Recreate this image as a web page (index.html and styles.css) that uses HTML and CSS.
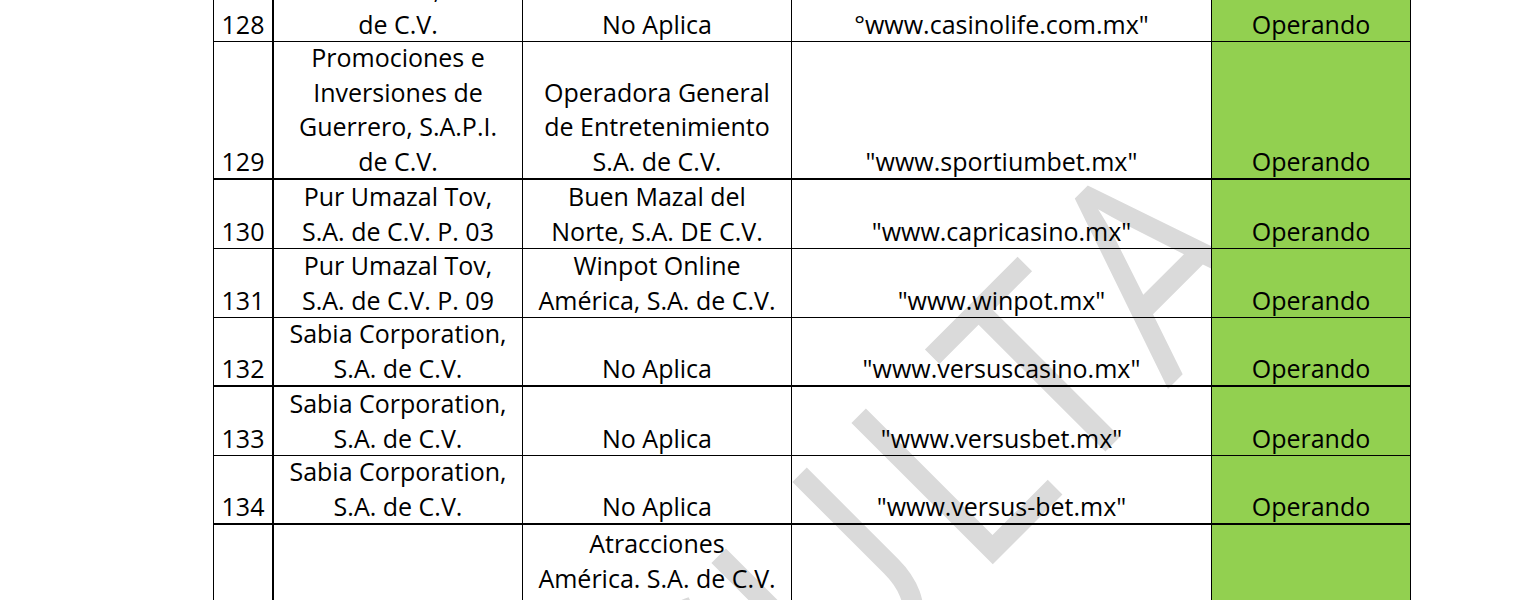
FILE: index.html
```html
<!DOCTYPE html>
<html lang="es">
<head>
<meta charset="utf-8">
<title>Listado de operadores</title>
<link rel="stylesheet" href="styles.css">
</head>
<body>
<svg class="watermark" width="1530" height="600" viewBox="0 0 1530 600" aria-hidden="true">
  <text class="wm-text" transform="translate(778.5 778.5) rotate(-45) scale(0.88 1)" x="-691 -509 -283 -62 94 317 460 626" y="0">CONSULTA</text>
</svg>
<div class="sheet">
  <div class="c num">128</div>
  <div class="c">Casino Life, S.A.<br>de C.V.</div>
  <div class="c">No Aplica</div>
  <div class="c">°www.casinolife.com.mx"</div>
  <div class="c ok">Operando</div>

  <div class="c num thick">129</div>
  <div class="c thick">Promociones e<br>Inversiones de<br>Guerrero, S.A.P.I.<br>de C.V.</div>
  <div class="c thick">Operadora General<br>de Entretenimiento<br>S.A. de C.V.</div>
  <div class="c thick">"www.sportiumbet.mx"</div>
  <div class="c ok thick">Operando</div>

  <div class="c num">130</div>
  <div class="c">Pur Umazal Tov,<br>S.A. de C.V. P. 03</div>
  <div class="c">Buen Mazal del<br>Norte, S.A. DE C.V.</div>
  <div class="c">"www.capricasino.mx"</div>
  <div class="c ok">Operando</div>

  <div class="c num">131</div>
  <div class="c">Pur Umazal Tov,<br>S.A. de C.V. P. 09</div>
  <div class="c">Winpot Online<br>América, S.A. de C.V.</div>
  <div class="c">"www.winpot.mx"</div>
  <div class="c ok">Operando</div>

  <div class="c num thick">132</div>
  <div class="c thick">Sabia Corporation,<br>S.A. de C.V.</div>
  <div class="c thick">No Aplica</div>
  <div class="c thick">"www.versuscasino.mx"</div>
  <div class="c ok thick">Operando</div>

  <div class="c num">133</div>
  <div class="c">Sabia Corporation,<br>S.A. de C.V.</div>
  <div class="c">No Aplica</div>
  <div class="c">"www.versusbet.mx"</div>
  <div class="c ok">Operando</div>

  <div class="c num thick">134</div>
  <div class="c thick">Sabia Corporation,<br>S.A. de C.V.</div>
  <div class="c thick">No Aplica</div>
  <div class="c thick">"www.versus-bet.mx"</div>
  <div class="c ok thick">Operando</div>

  <div class="c num">135</div>
  <div class="c"></div>
  <div class="c top">Atracciones<br>América. S.A. de C.V.</div>
  <div class="c"></div>
  <div class="c ok">Operando</div>
</div>
</body>
</html>
```

FILE: styles.css
```css
html, body {
  margin: 0;
  padding: 0;
  background: #ffffff;
  overflow: hidden;
}

body {
  width: 1530px;
  height: 600px;
  position: relative;
}

.watermark {
  position: absolute;
  left: 0;
  top: 0;
  z-index: 0;
  pointer-events: none;
}

.wm-text {
  font-family: "Open Sans", "Liberation Sans", sans-serif;
  font-size: 280px;
  font-weight: 380;
  fill: #dadada;
}

.sheet {
  position: relative;
  z-index: 1;
  display: grid;
  grid-template-columns: 60px 249px 269px 420px 199px;
  grid-template-rows: 69px 138px 69px 69px 69px 69px 69px 104px;
  width: max-content;
  margin: -27px 0 0 213px;
  border-left: 1px solid #000000;
  font-family: "Open Sans", "Liberation Sans", sans-serif;
  font-size: 25px;
  line-height: 34.5px;
  color: #000000;
}

.c {
  box-sizing: border-box;
  display: flex;
  flex-direction: column;
  justify-content: flex-end;
  text-align: center;
  white-space: nowrap;
  padding: 0 2px;
  border-right: 1px solid #000000;
  border-bottom: 1px solid #000000;
}

.c.num {
  border-right-width: 2px;
}

.c.thick {
  border-bottom-width: 2px;
}

.c.top {
  justify-content: flex-start;
  padding-top: 1px;
}

.c.ok {
  background: #92d050;
}
```
